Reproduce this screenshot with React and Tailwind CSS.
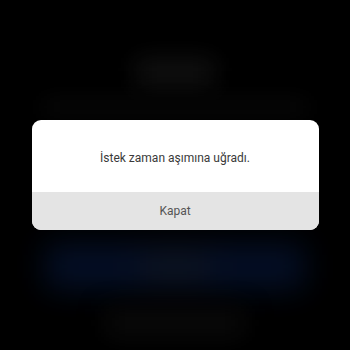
export default function App() {
  return (
    <div className="relative w-[350px] h-[350px] overflow-hidden bg-black font-['Roboto',sans-serif]">
      {/* blurred page behind the dialog */}
      <div className="flex h-full flex-col items-center pt-[58px]">
        <div className="h-[30px] w-[80px] bg-[#141414] blur-md" />
        <div className="mt-[12px] h-[14px] w-[270px] bg-[#0c0c0c] blur-md" />
        <div className="mt-[130px] flex h-[45px] w-[260px] items-center justify-center bg-[#051331] blur-lg">
          <div className="h-[28px] w-[70px] bg-[#121a2c]" />
        </div>
        <div className="mt-[20px] h-[28px] w-[140px] bg-[#0c0c0c] blur-md" />
      </div>

      {/* dialog */}
      <div className="absolute inset-0 flex items-center justify-center bg-black/20">
        <div className="mb-[1px] w-[287px] overflow-hidden rounded-[9px] bg-white">
          <div className="flex h-[72px] items-center justify-center pt-[4px] text-[12px] text-[#3a3a3a]">
            İstek zaman aşımına uğradı.
          </div>
          <div className="flex h-[38px] items-center justify-center bg-[#e4e4e4] text-[12px] text-[#555]">
            Kapat
          </div>
        </div>
      </div>
    </div>
  );
}
